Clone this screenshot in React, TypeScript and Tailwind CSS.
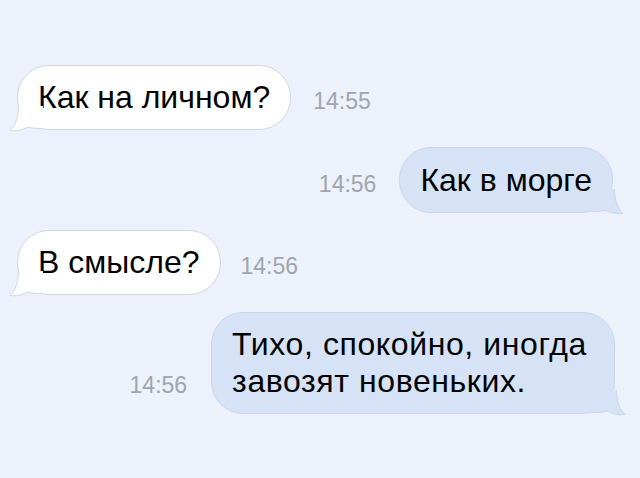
function TailLeft() {
  return (
    <svg
      className="pointer-events-none absolute bottom-[-3px] left-[-9px]"
      width="34"
      height="26"
      viewBox="0 0 34 26"
    >
      <path
        d="M9.5 0 C9.5 12 6 20 1 24.5 C8 25.5 14 23.5 19 21 C23 22.5 28 22.5 34 22.5 L34 0 Z"
        fill="#ffffff"
      />
      <path
        d="M9.5 0 C9.5 12 6 20 1 24.5 C8 25.5 14 23.5 19 21 C23 22.5 28 22.5 34 22.5"
        fill="none"
        stroke="#d3d8e0"
        strokeWidth="1"
      />
    </svg>
  );
}

function TailRight() {
  return (
    <svg
      className="pointer-events-none absolute bottom-[-3px] right-[-12px]"
      width="34"
      height="26"
      viewBox="0 0 34 26"
    >
      <path
        d="M24.5 0 C24.5 12 28 20 33 24.5 C26 25.5 20 23.5 15 21 C11 22.5 6 22.5 0 22.5 L0 0 Z"
        fill="#d6e3f7"
      />
      <path
        d="M24.5 0 C24.5 12 28 20 33 24.5 C26 25.5 20 23.5 15 21 C11 22.5 6 22.5 0 22.5"
        fill="none"
        stroke="#c9d6ea"
        strokeWidth="1"
      />
    </svg>
  );
}

function Time({ value }: { value: string }) {
  return <span className="mb-[17px] text-[23px] leading-none text-[#a0a5ad]">{value}</span>;
}

function Incoming({ text, time, gap }: { text: string; time: string; gap: string }) {
  return (
    <div className={`flex items-end ${gap}`}>
      <div className="relative rounded-[32px] border border-[#d3d8e0] bg-white px-[20px] py-[12px] text-[32px] leading-[39px] text-black">
        {text}
        <TailLeft />
      </div>
      <Time value={time} />
    </div>
  );
}

function Outgoing({
  children,
  time,
  gap,
  box,
}: {
  children: React.ReactNode;
  time: string;
  gap: string;
  box: string;
}) {
  return (
    <div className={`flex items-end justify-end ${gap}`}>
      <Time value={time} />
      <div
        className={`relative rounded-[32px] border border-[#c9d6ea] bg-[#d6e3f7] text-[32px] text-black ${box}`}
      >
        {children}
        <TailRight />
      </div>
    </div>
  );
}

function App() {
  return (
    <div
      className="flex h-[478px] w-[640px] flex-col gap-[17px] overflow-hidden bg-[#ecf1fb] pl-[17px] pr-[27px] pt-[65px]"
      style={{ fontFamily: '"Liberation Sans", Arial, sans-serif' }}
    >
      <Incoming text="Как на личном?" time="14:55" gap="gap-[22px]" />
      <Outgoing time="14:56" gap="gap-[23px]" box="px-[20px] py-[13px] leading-[38px]">
        Как в морге
      </Outgoing>
      <Incoming text="В смысле?" time="14:56" gap="gap-[20px]" />
      <Outgoing
        time="14:56"
        gap="gap-[24px]"
        box="mr-[-2px] pl-[20px] pr-[27px] py-[13px] leading-[37px] tracking-[0.6px]"
      >
        Тихо, спокойно, иногда
        <br />
        завозят новеньких.
      </Outgoing>
    </div>
  );
}

export default App;
